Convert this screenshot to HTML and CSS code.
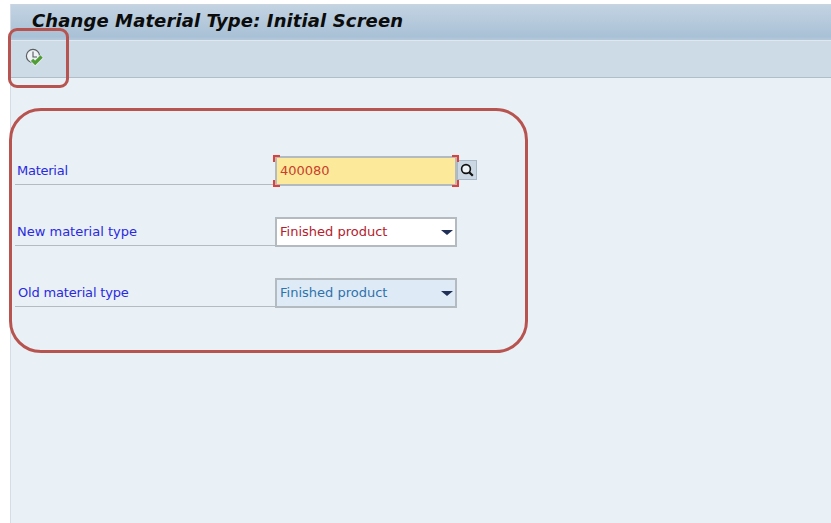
FILE: index.html
```html
<!DOCTYPE html>
<html lang="en">
<head>
<meta charset="utf-8">
<title>Change Material Type: Initial Screen</title>
<link rel="stylesheet" href="styles.css">
</head>
<body>
<div class="window">
  <header class="titlebar"><h1 class="title">Change Material Type: Initial Screen</h1></header>
  <div class="toolbar">
    <button class="tool" type="button" aria-label="Execute">
      <svg width="20" height="20" viewBox="0 0 20 20">
        <circle cx="9" cy="9" r="6.6" fill="#eef2f5" stroke="#5c5f62" stroke-width="1.2"/>
        <path d="M9 4.5V10H13" fill="none" stroke="#55585c" stroke-width="1.1"/>
        <path d="M7.6 12.4l3.6 3.6 6.8-6.8" fill="none" stroke="#e6edf2" stroke-width="4.8"/>
        <path d="M8 12.8l3.2 3.1 6.4-6.4" fill="none" stroke="#4f9d34" stroke-width="3.2"/>
      </svg>
    </button>
  </div>
  <main class="form">
    <div class="row row-first">
      <label class="label short">Material</label>
      <div class="input required"><span class="value">400080</span>
        <i class="c tl"></i><i class="c tr"></i><i class="c bl"></i><i class="c br"></i>
      </div>
      <button class="help" type="button" aria-label="Search">
        <svg width="16" height="16" viewBox="0 0 16 16">
          <circle cx="7" cy="7" r="4.4" fill="#eef3f6" stroke="#111" stroke-width="1.6"/>
          <path d="M10.2 10.2l3.6 3.6" stroke="#111" stroke-width="2.2"/>
        </svg>
      </button>
    </div>
    <div class="row">
      <label class="label">New material type</label>
      <div class="select"><span class="value red">Finished product</span><i class="arrow"></i></div>
    </div>
    <div class="row">
      <label class="label old">Old material type</label>
      <div class="select readonly"><span class="value blue">Finished product</span><i class="arrow"></i></div>
    </div>
  </main>
</div>
<div class="mark mark-tool"></div>
<div class="mark mark-form"></div>
</body>
</html>
```
FILE: styles.css
```css
* { box-sizing: border-box; }
html, body { margin: 0; height: 100%; background: #fff; overflow: hidden; }
body { padding: 4px 0 0 10px; font-family: "DejaVu Sans", sans-serif; }
.window { height: 519px; background: #e9f0f6; border-left: 1px solid #d5dce3; display: flex; flex-direction: column; }
.titlebar { height: 36px; flex: none; background: linear-gradient(#c3d3e2, #a9c1d6 90%, #b4c8da); border-top: 1px solid #c9d4de; display: flex; align-items: center; padding: 0 0 4px 21px; }
.title { margin: 0; font-size: 18px; font-weight: bold; font-style: italic; color: #0c0c0c; white-space: nowrap; letter-spacing: .11px; }
.toolbar { height: 38px; flex: none; background: #cddbe7; border-top: 1px solid #dfe8ef; border-bottom: 1px solid #b1bdc8; padding: 6px 0 0 13px; }
.tool { border: 0; padding: 0; background: none; display: block; width: 20px; height: 20px; }
.form { padding-top: 77px; }
.row { display: flex; align-items: flex-start; height: 61px; padding-left: 4px; }
.label { width: 260px; height: 30px; flex: none; border-bottom: 1px solid #b4bcc3; font-size: 13px; line-height: 16px; padding: 8px 0 0 2px; color: #2a2ae0; }
.short { letter-spacing: -.25px; }
.old { padding-left: 3px; letter-spacing: -.18px; }
.input, .select { position: relative; width: 182px; height: 30px; margin-top: 1px; flex: none; display: flex; align-items: center; padding-left: 3px; font-size: 13px; border: 2px solid #b3bac0; }
.input { background: #fde99a; }
.select { background: #fff; justify-content: space-between; padding-right: 2px; }
.readonly { background: #deebf6; }
.value { color: #c9402c; padding-bottom: 2px; }
.red { color: #b5202c; }
.blue { color: #2f72ad; }
.arrow { width: 0; height: 0; border: 6px solid transparent; border-top: 5px solid #1f2f58; border-bottom: 0; }
.c { position: absolute; width: 7px; height: 7px; border: 0 solid #e0403c; }
.tl { top: -3px; left: -4px; border-width: 2px 0 0 2px; }
.tr { top: -3px; right: -4px; border-width: 2px 2px 0 0; }
.bl { bottom: -3px; left: -4px; border-width: 0 0 2px 2px; }
.br { bottom: -3px; right: -4px; border-width: 0 2px 2px 0; }
.help { width: 20px; height: 20px; margin: 5px 0 0 0; padding: 0; border: 1px solid #a9b8c6; background: #cbd8e4; display: flex; align-items: center; justify-content: center; }
.mark { position: absolute; border: 3px solid #b85450; }
.mark-tool { left: 8px; top: 28px; width: 61px; height: 60px; border-radius: 9px; }
.mark-form { left: 9px; top: 108px; width: 519px; height: 245px; border-radius: 32px; }
```
